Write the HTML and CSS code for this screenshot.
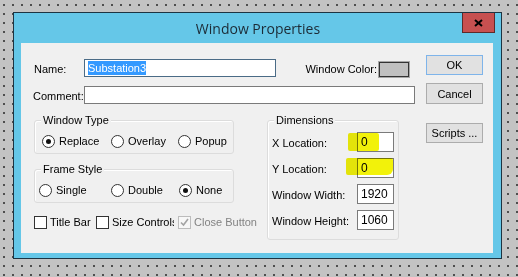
FILE: index.html
```html
<!DOCTYPE html>
<html lang="en">
  <head>
    <meta charset="UTF-8" />
    <title>Window Properties</title>
    <link rel="stylesheet" href="styles.css">
  </head>
  <body>
    <div class="window">
      <div class="titlebar">
        <span></span>
        <span class="title">Window Properties</span>
        <button class="close" type="button">
          <svg width="9" height="8" viewBox="0 0 9 8">
            <path d="M1 1 L8 7 M8 1 L1 7" stroke="#000" stroke-width="2" fill="none" />
          </svg>
        </button>
      </div>

      <div class="client">
        <div class="main">
          <div class="row">
            <span class="lbl">Name:</span>
            <div class="field field-name"><span class="sel">Substation3</span></div>
            <span class="color-lbl">Window Color:</span>
            <span class="swatch"></span>
          </div>

          <div class="row row-comment">
            <span class="lbl">Comment:</span>
            <div class="field field-comment"></div>
          </div>

          <div class="groups">
            <div class="left">
              <div class="group">
                <span class="legend">Window Type</span>
                <div class="radios radios-type">
                  <span class="opt"><span class="radio on"></span>Replace</span>
                  <span class="opt"><span class="radio"></span>Overlay</span>
                  <span class="opt"><span class="radio"></span>Popup</span>
                </div>
              </div>

              <div class="group group-frame">
                <span class="legend">Frame Style</span>
                <div class="radios radios-frame">
                  <span class="opt"><span class="radio"></span>Single</span>
                  <span class="opt"><span class="radio"></span>Double</span>
                  <span class="opt"><span class="radio on"></span>None</span>
                </div>
              </div>

              <div class="checks">
                <span class="opt"><span class="check"></span>Title Bar</span>
                <span class="opt"><span class="check"></span><span class="clip">Size Controls</span></span>
                <span class="opt disabled">
                  <span class="check">
                    <svg width="11" height="11" viewBox="0 0 11 11">
                      <path d="M2 5.5 L4.5 8 L9 2" stroke="#a3a3a3" stroke-width="1.6" fill="none" />
                    </svg>
                  </span>Close Button
                </span>
              </div>
            </div>

            <div class="group dims">
              <span class="legend">Dimensions</span>
              <div class="dim">
                <span>X Location:</span>
                <div class="field field-num">0</div>
                <span class="mark mark-x"></span>
              </div>
              <div class="dim">
                <span>Y Location:</span>
                <div class="field field-num">0</div>
                <span class="mark mark-y"></span>
              </div>
              <div class="dim">
                <span>Window Width:</span>
                <div class="field field-num">1920</div>
              </div>
              <div class="dim">
                <span>Window Height:</span>
                <div class="field field-num">1060</div>
              </div>
            </div>
          </div>
        </div>

        <div class="buttons">
          <button class="btn btn-ok" type="button">OK</button>
          <button class="btn btn-cancel" type="button">Cancel</button>
          <button class="btn btn-scripts" type="button">Scripts ...</button>
        </div>
      </div>
    </div>
  </body>
</html>
```

FILE: styles.css
```css
body {
    margin: 0;
    padding: 12px 0 0 13px;
    height: 277px;
    box-sizing: border-box;
    overflow: hidden;
    background-color: #c3c3c3;
    background-image: radial-gradient(circle at 1px 1px, #4a4a4a 0.7px, transparent 0.9px);
    background-size: 9px 9px;
    background-position: 3px 4px;
    font-family: "Liberation Sans", Arial, sans-serif;
    font-size: 11px;
    color: #000;
}
.window {
    width: 489px;
    height: 247px;
    box-sizing: border-box;
    padding: 0 8px 5px 7px;
    border: 1px solid #1d3442;
    background-color: #65c7e8;
}
.titlebar {
    height: 30px;
    display: grid;
    grid-template-columns: 1fr auto 1fr;
    align-items: start;
}
.title {
    align-self: center;
    font-family: "Open Sans", "Noto Sans", sans-serif;
    font-size: 14px;
    color: #1c2b36;
    padding-left: 2px;
}
.close {
    justify-self: end;
    margin-right: -2px;
    width: 33px;
    height: 20px;
    padding: 0;
    border: 1px solid #5e2a2a;
    border-top: none;
    background-color: #c75050;
    display: flex;
    align-items: center;
    justify-content: center;
}
.client {
    width: 472px;
    height: 210px;
    box-sizing: border-box;
    padding: 12px 10px 0 12px;
    background-color: #f0f0f0;
    display: flex;
}
.main {
    width: 382px;
    margin-top: 4px;
}
.row {
    height: 18px;
    display: flex;
    align-items: center;
    padding-right: 6px;
}
.row-comment {
    margin-top: 9px;
    padding-right: 0;
}
.lbl {
    width: 50px;
    padding-left: 1px;
    padding-top: 2px;
}
.row-comment .lbl {
    padding-left: 0;
    width: 51px;
}
.field {
    box-sizing: border-box;
    height: 18px;
    background: #fff;
    border: 1px solid #7a7a7a;
    padding: 1px 3px 0;
    line-height: 15px;
}
.field-name {
    width: 192px;
    border-color: #4a6b86;
}
.field-comment {
    flex: 1;
}
.sel {
    background-color: #3399ff;
    color: #fff;
    padding: 1px 0;
}
.color-lbl {
    margin-left: auto;
    padding-top: 2px;
    margin-right: 2px;
}
.swatch {
    align-self: flex-end;
    width: 30px;
    height: 15px;
    box-sizing: border-box;
    border: 1px solid #333;
    box-shadow: 0 0 0 1px #a7a7a7;
    background: #c0c0c0;
}
.groups {
    margin-top: 16px;
    display: flex;
    align-items: flex-start;
}
.left {
    width: 200px;
    margin-left: 1px;
}
.group {
    position: relative;
    box-sizing: border-box;
    border: 1px solid #dcdcdc;
    border-radius: 3px;
    box-shadow: inset 1px 1px 0 #fff;
}
.legend {
    position: absolute;
    top: -8px;
    left: 6px;
    padding: 0 2px;
    line-height: 14px;
    background: #f0f0f0;
}
.group-frame {
    margin-top: 15px;
}
.radios {
    height: 14px;
    margin: 13px 0 5px;
    display: grid;
    align-items: center;
}
.radios-type {
    padding-left: 7px;
    grid-template-columns: 69px 67px auto;
}
.radios-frame {
    padding-left: 4px;
    grid-template-columns: 72px 68px auto;
}
.opt {
    display: flex;
    align-items: center;
    white-space: nowrap;
}
.radio {
    width: 13px;
    height: 13px;
    box-sizing: border-box;
    border: 1px solid #333;
    border-radius: 50%;
    background: #fff;
    margin-right: 4px;
    display: flex;
    align-items: center;
    justify-content: center;
}
.radio.on::after {
    content: "";
    width: 5px;
    height: 5px;
    border-radius: 50%;
    background: #111;
}
.checks {
    height: 14px;
    margin-top: 12px;
    display: grid;
    grid-template-columns: 62px 82px auto;
    align-items: center;
}
.check {
    width: 13px;
    height: 13px;
    box-sizing: border-box;
    border: 1px solid #333;
    background: #fff;
    margin-right: 3px;
    display: flex;
    align-items: center;
    justify-content: center;
}
.clip {
    width: 62px;
    overflow: hidden;
}
.disabled {
    color: #838383;
}
.disabled .check {
    border-color: #bcbcbc;
    background: #f7f7f7;
}
.dims {
    width: 132px;
    height: 120px;
    margin-left: 33px;
    padding: 11px 4px 0 4px;
    display: flex;
    flex-direction: column;
    gap: 6px;
}
.dim {
    position: relative;
    height: 20px;
    display: flex;
    align-items: center;
    justify-content: space-between;
}
.dim span:first-child {
    padding-top: 2px;
}
.field-num {
    width: 37px;
    height: 20px;
    line-height: 17px;
    font-size: 12px;
}
.mark {
    position: absolute;
    background: #f2f20a;
    mix-blend-mode: multiply;
    border-radius: 2px;
}
.mark-x {
    left: 76px;
    top: 1px;
    width: 31px;
    height: 18px;
}
.mark-y {
    left: 74px;
    top: 0;
    width: 47px;
    height: 17px;
    border-radius: 2px 2px 6px 2px;
}
.buttons {
    margin-left: 11px;
    width: 57px;
    display: flex;
    flex-direction: column;
}
.btn {
    box-sizing: border-box;
    width: 57px;
    padding: 0;
    border: 1px solid #acacac;
    background: #e1e1e1;
    font-family: "Liberation Sans", Arial, sans-serif;
    font-size: 11px;
    color: #000;
}
.btn-ok {
    height: 20px;
    border-color: #7eb4ea;
}
.btn-cancel {
    height: 21px;
    margin-top: 8px;
}
.btn-scripts {
    height: 20px;
    margin-top: 19px;
}
```
